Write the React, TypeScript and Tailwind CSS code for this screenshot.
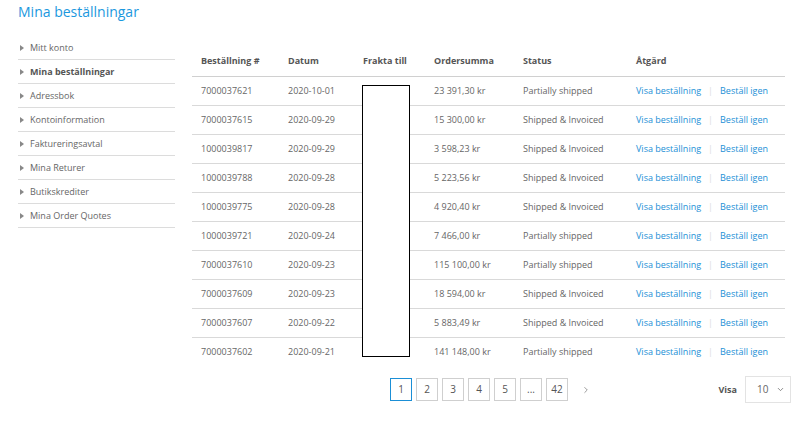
import { ChevronDown, ChevronRight } from 'lucide-react';

const menu = [
  'Mitt konto',
  'Mina beställningar',
  'Adressbok',
  'Kontoinformation',
  'Faktureringsavtal',
  'Mina Returer',
  'Butikskrediter',
  'Mina Order Quotes',
];

const orders = [
  ['7000037621', '2020-10-01', '23 391,30 kr', 'Partially shipped'],
  ['7000037615', '2020-09-29', '15 300,00 kr', 'Shipped & Invoiced'],
  ['1000039817', '2020-09-29', '3 598,23 kr', 'Shipped & Invoiced'],
  ['1000039788', '2020-09-28', '5 223,56 kr', 'Shipped & Invoiced'],
  ['1000039775', '2020-09-28', '4 920,40 kr', 'Shipped & Invoiced'],
  ['1000039721', '2020-09-24', '7 466,00 kr', 'Partially shipped'],
  ['7000037610', '2020-09-23', '115 100,00 kr', 'Partially shipped'],
  ['7000037609', '2020-09-23', '18 594,00 kr', 'Shipped & Invoiced'],
  ['7000037607', '2020-09-22', '5 883,49 kr', 'Shipped & Invoiced'],
  ['7000037602', '2020-09-21', '141 148,00 kr', 'Partially shipped'],
];

const pages = ['1', '2', '3', '4', '5', '...', '42'];

export default function App() {
  return (
    <div
      className="w-[795px] h-[421px] bg-white overflow-hidden text-[#666]"
      style={{ fontFamily: '"Open Sans", "Liberation Sans", sans-serif' }}
    >
      <h1 className="pl-[18px] pt-[2px] text-[14px] leading-[20px] text-[#1b98de] font-normal">
        Mina beställningar
      </h1>

      <div className="flex mt-[14px]">
        {/* sidebar */}
        <ul className="ml-[18px] w-[157px] shrink-0">
          {menu.map((item, i) => (
            <li
              key={item}
              className="h-[24px] flex items-center border-b border-[#dcdcdc] text-[9px]"
            >
              <span className="ml-[2px] mr-[6px] w-0 h-0 border-y-[3px] border-y-transparent border-l-[4px] border-l-[#888]" />
              <span className={i === 1 ? 'font-bold text-[#555]' : 'text-[#666]'}>{item}</span>
            </li>
          ))}
        </ul>

        {/* orders */}
        <div className="ml-[17px] mt-[10px] w-[593px] relative">
          <table className="w-full border-collapse text-[9px]">
            <thead>
              <tr className="h-[30px] border-b border-[#d0d0d0] text-left text-[#555]">
                <th className="w-[87px] pl-[9px] font-bold">Beställning #</th>
                <th className="w-[75px] pl-[9px] font-bold">Datum</th>
                <th className="w-[71px] pl-[9px] font-bold">Frakta till</th>
                <th className="w-[89px] pl-[9px] font-bold">Ordersumma</th>
                <th className="w-[113px] pl-[9px] font-bold">Status</th>
                <th className="pl-[9px] font-bold">Åtgärd</th>
              </tr>
            </thead>
            <tbody>
              {orders.map((o, i) => (
                <tr
                  key={o[0]}
                  className={`h-[29px] ${i < orders.length - 1 ? 'border-b border-[#d9d9d9]' : ''}`}
                >
                  <td className="pl-[9px]">{o[0]}</td>
                  <td className="pl-[9px]">{o[1]}</td>
                  <td className="pl-[9px]"></td>
                  <td className="pl-[9px]">{o[2]}</td>
                  <td className="pl-[9px]">{o[3]}</td>
                  <td className="pl-[9px]">
                    <span className="text-[#1b8fd6]">Visa beställning</span>
                    <span className="mx-[7px] text-[#ddd]">|</span>
                    <span className="text-[#1b8fd6]">Beställ igen</span>
                  </td>
                </tr>
              ))}
            </tbody>
          </table>

          {/* redacted column */}
          <div className="absolute left-[170px] top-[39px] w-[48px] h-[272px] bg-white border border-black" />

          <div className="flex items-center mt-[10px]">
            <div className="flex items-center gap-[4px] ml-[198px]">
              {pages.map((p, i) => (
                <span
                  key={p}
                  className={`w-[22px] h-[23px] flex items-center justify-center text-[10px] text-[#555] border ${
                    i === 0 ? 'border-[#1b8fd6]' : 'border-[#cfcfcf]'
                  }`}
                >
                  {p}
                </span>
              ))}
              <ChevronRight className="ml-[9px] w-[10px] h-[10px] text-[#888]" strokeWidth={2} />
            </div>
            <span className="ml-auto mr-[8px] text-[9px] font-bold text-[#555]">Visa</span>
            <div className="mr-[-6px] w-[46px] h-[27px] border border-[#e3e3e3] flex items-center pl-[11px] text-[10px] text-[#666]">
              10
              <ChevronDown className="ml-[8px] w-[9px] h-[9px] text-[#666]" strokeWidth={2} />
            </div>
          </div>
        </div>
      </div>
    </div>
  );
}
